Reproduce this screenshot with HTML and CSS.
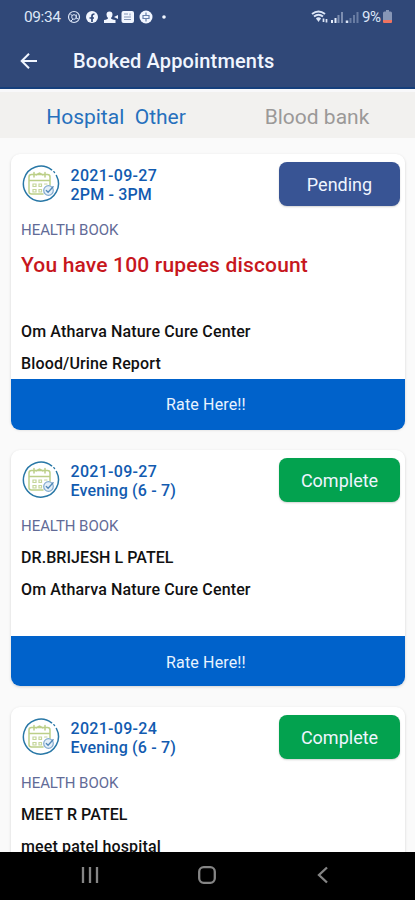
FILE: index.html
```html
<!DOCTYPE html>
<html lang="en">
<head>
<meta charset="utf-8">
<meta name="viewport" content="width=device-width, initial-scale=1">
<title>Booked Appointments</title>
<link rel="stylesheet" href="styles.css">
</head>
<body>
<svg class="defs" aria-hidden="true">
  <symbol id="calendar" viewBox="0 0 38 38">
    <g fill="none" stroke-linecap="round">
      <path d="M29.600 4.800A17.500 17.500 0 1 0 34.400 10.500" stroke="#2877a6" stroke-width="1.500"/>
      <path d="M31.800 6.600l.8.9" stroke="#2877a6" stroke-width="1.300"/>
      <path d="M28 20V12Q28 9.500 25.500 9.500H9.500Q7 9.500 7 12V26.500Q7 29 9.500 29H21M7 15.500H28M12 7.500V12M23 7.500V12M14 10L17.500 8L21 10" stroke="#bccf88" stroke-width="1.500"/>
      <path d="M11 19h3v2.500h-3zM17 19h2.500v2.500H17zM22.500 19h2.500M11 24.500h3V27h-3zM17 24.500h2.500V27H17z" stroke="#c5d69b" stroke-width="1.200"/>
      <circle cx="26.500" cy="25.500" r="4.800" fill="#e4eff8" stroke="#82aacf" stroke-width="1.200"/>
      <path d="M24.300 25.500l1.800 1.800 5-5.500" stroke="#5288b8" stroke-width="1.300"/>
    </g>
  </symbol>
</svg>
<div class="screen">
  <header class="top">
    <div class="status">
      <span class="clock">09:34</span>
      <svg class="notices" viewBox="0 0 102 16" width="102" height="16" fill="none">
        <circle cx="7" cy="8" r="5.500" stroke="#dce6f7" stroke-width="1.200"/>
        <circle cx="7" cy="8" r="2.300" stroke="#dce6f7"/><path d="M9.300 5.500v3q0 2 2 1M3.500 5l2 2M4 12l2-2" stroke="#dce6f7"/>
        <circle cx="25" cy="8" r="6" fill="#f1f6ff"/><path d="M25 13V7q0-2 2.500-2M22.500 9h4.500" stroke="#304878" stroke-width="1.700"/>
        <path d="M42.500 2.500q3 0 3 3 0 2-1.500 3.500 0 1.500 4.500 2v3H37v-3q4-.5 4-2-1.500-1.500-1.500-3.500 0-3 3-3zM47 8l4-2v4z" fill="#f1f6ff"/>
        <rect x="54.500" y="2" width="12.500" height="12" rx="2" fill="#f1f6ff"/><path d="M57 5h4M57 8h7M57 10.500h7M63 4.500v2" stroke="#8295b7" stroke-width="1"/>
        <circle cx="79" cy="8" r="6.500" fill="#f1f6ff"/><path d="M79 3.500v3M76 6.500h6v3h-6zM79 9.500v3" stroke="#6780aa" stroke-width="1.200"/>
        <circle cx="97" cy="8" r="1.800" fill="#f1f6ff"/>
      </svg>
      <svg class="signals" viewBox="0 0 48 16" width="48" height="16" fill="none">
        <path d="M1 5Q7.500 0 14 5M3 7.500q4.500-3.500 9 0M5.500 10q2-1.500 4 0" stroke="#dce6f7" stroke-width="2"/>
        <path d="M7.500 13L5.500 10h4z" fill="#dce6f7"/><path d="M12.500 13V9.500M15.500 10v3.500" stroke="#dce6f7" stroke-width="1.700"/>
        <path d="M21 14v-3M24.500 14V9" stroke="#e6eefb" stroke-width="2"/><path d="M27.500 14V6M31 14V3" stroke="#7d8eb0" stroke-width="2"/>
        <path d="M36 14v-2.500" stroke="#dce6f7" stroke-width="2.500"/><path d="M39.500 14V9M43 14V6M46.500 14V3" stroke="#697da3" stroke-width="2"/>
      </svg>
      <span class="percent">9%</span>
      <svg class="battery" viewBox="0 0 9 14" width="9" height="14">
        <path d="M3 0h3v1.500h1.500Q9 1.500 9 3v8H0V3q0-1.500 1.500-1.500H3z" fill="#8797b7"/><path d="M0 10h9v2q0 1-1 1H1q-1 0-1-1z" fill="#ef7461"/>
      </svg>
    </div>
    <div class="bar">
      <svg class="back" viewBox="0 0 18 18" width="18" height="18" fill="none" stroke="#f1f6ff" stroke-width="2"><path d="M17 9H2M9 1.700L1.700 9 9 16.300"/></svg>
      <h1>Booked Appointments</h1>
    </div>
  </header>
  <nav class="tabs">
    <span class="tab active">Hospital&nbsp; Other</span>
    <span class="tab">Blood bank</span>
  </nav>
  <main class="list">
    <article class="card first">
      <div class="head">
        <svg class="cal"><use href="#calendar"/></svg>
        <div class="when"><div class="date">2021-09-27</div><div class="slot">2PM - 3PM</div></div>
        <span class="badge pending">Pending</span>
      </div>
      <div class="book">HEALTH BOOK</div>
      <div class="offer">You have 100 rupees discount</div>
      <div class="line">Om Atharva Nature Cure Center</div>
      <div class="line">Blood/Urine Report</div>
      <div class="rate">Rate Here!!</div>
    </article>
    <article class="card second">
      <div class="head">
        <svg class="cal"><use href="#calendar"/></svg>
        <div class="when"><div class="date">2021-09-27</div><div class="slot">Evening (6 - 7)</div></div>
        <span class="badge complete">Complete</span>
      </div>
      <div class="book">HEALTH BOOK</div>
      <div class="line name">DR.BRIJESH L PATEL</div>
      <div class="line">Om Atharva Nature Cure Center</div>
      <div class="rate">Rate Here!!</div>
    </article>
    <article class="card third">
      <div class="head">
        <svg class="cal"><use href="#calendar"/></svg>
        <div class="when"><div class="date">2021-09-24</div><div class="slot">Evening (6 - 7)</div></div>
        <span class="badge complete">Complete</span>
      </div>
      <div class="book">HEALTH BOOK</div>
      <div class="line name">MEET R PATEL</div>
      <div class="line">meet patel hospital</div>
    </article>
  </main>
  <footer class="system">
    <svg viewBox="0 0 18 18" width="18" height="18" fill="none" stroke="#858585" stroke-width="2.300"><path d="M2 1v16M9 1v16M16 1v16"/></svg>
    <svg viewBox="0 0 18 18" width="18" height="18" fill="none" stroke="#858585" stroke-width="2.300"><rect x="1.200" y="1.200" width="15.600" height="15.600" rx="4.500"/></svg>
    <svg viewBox="0 0 18 18" width="18" height="18" fill="none" stroke="#858585" stroke-width="2.300"><path d="M13 1.500L5 9l8 7.500"/></svg>
  </footer>
</div>
</body>
</html>
```
FILE: styles.css
```css
* { box-sizing: border-box; }
body { margin: 0; font-family: Roboto, "Liberation Sans", sans-serif; background: #fafafa; }
svg { display: block; flex: none; }
.defs { display: none; }
.screen { width: 415px; height: 900px; display: flex; flex-direction: column; overflow: hidden; }
.top { height: 89px; flex: none; background: #304878; border-bottom: 2px solid #153f7c; color: #f1f6ff; }
.status { height: 34px; padding: 0 23px 1px 24px; display: flex; align-items: center; font-size: 15.500px; color: #dce6f7; }
.clock { width: 37px; white-space: nowrap; letter-spacing: -.4px; }
.notices { margin-left: 6px; }
.signals { margin-left: auto; }
.percent { width: 20px; margin-left: 3px; white-space: nowrap; font-size: 15px; letter-spacing: -.5px; }
.battery { margin-left: 1px; }
.bar { height: 54px; display: flex; align-items: center; padding-left: 20px; }
h1 { margin: 0 0 0 35px; font-size: 20px; font-weight: 500; line-height: 24px; letter-spacing: .15px; white-space: nowrap; }
.tabs { height: 49px; flex: none; border-top: 3px solid #f8f8fa; background: #f2f1ef; display: grid; grid-template-columns: 232px 170px; padding-top: 12px; }
.tab { text-align: center; line-height: 27px; font-size: 21px; color: #9b9998; white-space: nowrap; }
.tab.active { color: #2670bd; }
.list { height: 714px; flex: none; overflow: hidden; padding: 16px 10px 0 11px; display: flex; flex-direction: column; gap: 21px; }
.card { flex: none; border-radius: 9px; background: #fff; box-shadow: 0 1px 3px rgba(0,0,0,.16); display: flex; flex-direction: column; }
.first { height: 275px; }
.second { height: 236px; }
.third { height: 236px; }
.head { height: 60px; display: flex; flex: none; padding: 8px 5px 0 10.500px; }
.cal { width: 38px; height: 38px; margin-top: 3px; }
.when { margin: 4px 0 0 11px; color: #125bb0; font-size: 16px; font-weight: 500; line-height: 19px; white-space: nowrap; }
.date { letter-spacing: .3px; }
.slot { letter-spacing: .17px; }
.badge { width: 121px; height: 44px; margin-left: auto; border-radius: 8px; color: #eef5ff; font-size: 18px; line-height: 46px; text-align: center; box-shadow: 0 1px 2px rgba(0,0,0,.18); }
.pending { background: #385494; }
.complete { background: #03a24f; }
.book { height: 32px; flex: none; padding-left: 10px; line-height: 33px; font-size: 15px; letter-spacing: -.05px; color: #626b97; white-space: nowrap; }
.offer { height: 70px; flex: none; padding-left: 10px; line-height: 39px; color: #c7171d; font-size: 21px; font-weight: 500; letter-spacing: .17px; white-space: nowrap; }
.line { height: 32px; flex: none; padding-left: 10px; line-height: 32px; font-size: 16px; font-weight: 500; letter-spacing: .14px; color: #111; white-space: nowrap; }
.name { letter-spacing: .07px; }
.rate { height: 50px; flex: none; margin-top: auto; padding-right: 4px; border-radius: 0 0 9px 9px; background: #0062cb; color: #e9f3ff; font-size: 16px; letter-spacing: .15px; line-height: 53px; text-align: center; }
.first { height: 274.500px; margin-bottom: .5px; }
.first .rate { height: 50.500px; margin-top: -1px; line-height: 52px; }
.system { height: 48px; flex: none; background: #000; display: flex; align-items: center; justify-content: space-between; padding: 0 83px 2px 81px; }
```
